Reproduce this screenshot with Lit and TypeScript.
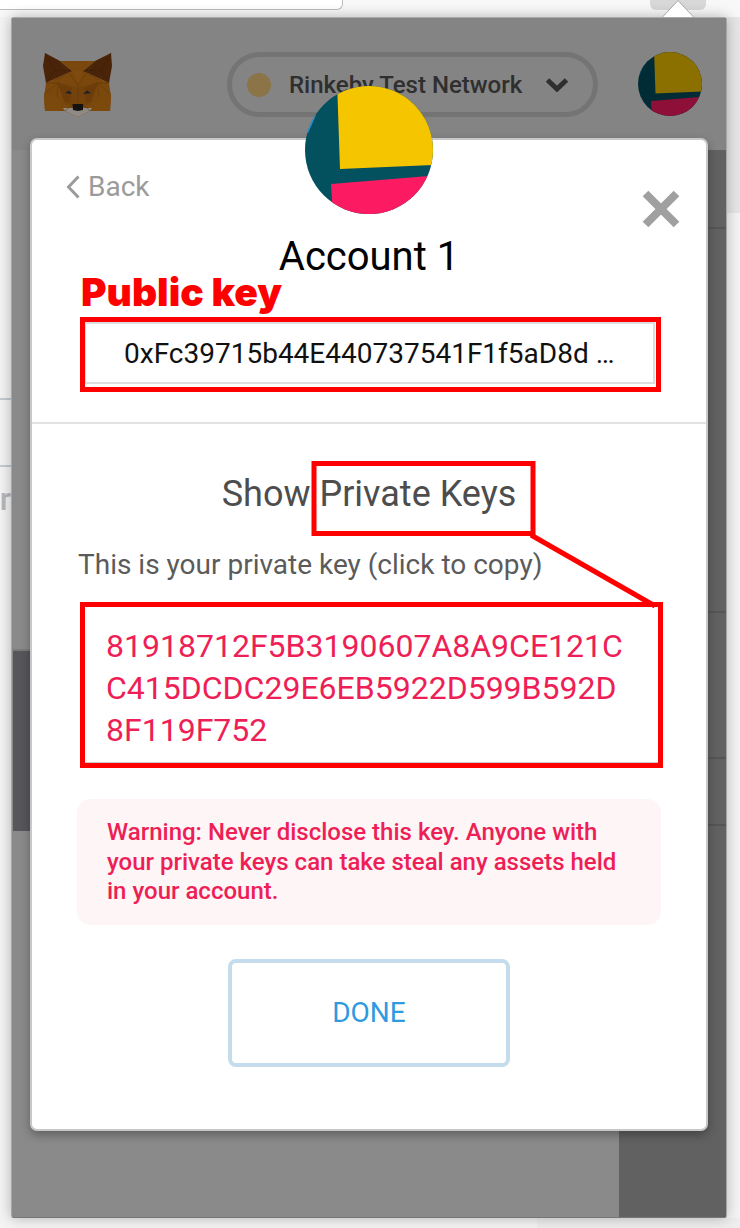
import { LitElement, html, css, svg } from "lit";
import { customElement } from "lit/decorators.js";

const avatar = (teal: string, yellow: string, pink: string, blue: string, cls: string) => html`
  <svg class=${cls} viewBox="0 0 128 128" aria-hidden="true">
    <defs><clipPath id="c-${cls}"><circle cx="64" cy="64" r="64"></circle></clipPath></defs>
    <g clip-path="url(#c-${cls})">
      <rect width="128" height="128" fill=${teal}></rect>
      <polygon points="11,29 3,47 -2,47 -2,29" fill=${blue}></polygon>
      <polygon points="32,-5 35,83 130,79 130,-5" fill=${yellow}></polygon>
      <polygon points="26,98 124,90 130,130 28,130" fill=${pink}></polygon>
    </g>
  </svg>`;

const fox = svg`
  <polygon points="2,1 17,9 29,19 3,31 0,14" fill="#4a2408"></polygon>
  <polygon points="68,1 52,9 40,19 66,31 69,14" fill="#4a2408"></polygon>
  <polygon points="17,9 52,9 40,19 66,31 68,45 67,59 47,59 35,65 22,59 2,59 1,45 3,31 29,19" fill="#7a470d"></polygon>
  <polygon points="29,19 35,33 40,19" fill="#7f4a0e"></polygon>
  <polygon points="15,31 34,35 54,31 47,52 35,54 22,52" fill="#74430c"></polygon>
  <polygon points="14,30 29,36 27,50 22,50" fill="#6c3d0a"></polygon>
  <polygon points="55,30 41,36 43,50 48,50" fill="#6c3d0a"></polygon>
  <polygon points="1,42 14,45 22,59 2,59" fill="#7c490d"></polygon>
  <polygon points="68,42 56,45 47,59 67,59" fill="#7c490d"></polygon>
  <polygon points="20,56 49,56 47,59 35,65 22,59" fill="#8f8a84"></polygon>
  <polygon points="29.5,52 40,52 40,58 35,59 30,58" fill="#141210"></polygon>
  <polygon points="22,41 26,38.5 29,42" fill="#16222e"></polygon>
  <polygon points="48,41 44,38.5 40,42" fill="#16222e"></polygon>
  <g stroke="#5f3609" stroke-width=".5" fill="none">
    <path d="M17 9 35 33 52 9M29 19 12 28M40 19 57 28M3 31 15 31 1 42M66 31 54 31 68 42M15 31 14 45M54 31 56 45M35 33V52M22 59 29.5 52M47 59 40 52"></path>
  </g>
  <g stroke="#3a1c06" stroke-width=".5" fill="none">
    <path d="M2 1 12 18 3 31M12 18 29 19M68 1 58 18 66 31M58 18 40 19"></path>
  </g>`;

@customElement("app-root")
export class AppRoot extends LitElement {
  static styles = css`
    :host {
      display: block;
      position: relative;
      width: 740px;
      height: 1228px;
      overflow: hidden;
      background: #f4f4f4;
      font-family: Roboto, "Liberation Sans", sans-serif;
    }
    .chrome { display: flex; height: 17px; background: #f8f8f8; }
    .urlbar {
      width: 343px;
      height: 10px;
      box-sizing: border-box;
      background: #fff;
      border: solid #bdbdbd;
      border-width: 0 1.5px 1.5px 0;
      border-radius: 0 0 6px 0;
    }
    .ext {
      width: 56px;
      height: 10px;
      margin-left: 307px;
      background: #d8d8d8;
      border-radius: 0 0 6px 6px;
    }
    .arrow { position: absolute; left: 660px; top: 0; width: 36px; height: 18px; z-index: 2; }
    .stage { display: flex; height: 1201px; }
    .left { width: 11px; padding-top: 381px; }
    .left i { display: block; height: 2px; background: #c4cbd2; }
    .left i + i { margin-top: 65px; }
    .left b {
      display: block;
      margin-top: 12px;
      margin-left: -11px;
      font: 500 32px/40px Roboto, sans-serif;
      color: #b6b8ba;
      text-align: right;
    }
    .popup {
      position: relative;
      z-index: 1;
      width: 716px;
      box-sizing: border-box;
      border-top: 1.5px solid #a9a9a9;
      border-left: 1px solid #a6a6a6;
      border-right: 1px solid #a6a6a6;
      border-bottom: 1px solid #777;
      border-radius: 3px;
      background: #8a8a8a;
      box-shadow: 0 0 14px rgba(0, 0, 0, 0.28);
      display: flex;
      flex-direction: column;
    }
    .header {
      height: 132px;
      flex: none;
      box-sizing: border-box;
      padding: 34px 24px 0 31px;
      background: #848484;
      display: flex;
      align-items: flex-start;
    }
    .fox { width: 70px; height: 66px; flex: none; }
    .pill {
      width: 371px;
      height: 65px;
      flex: none;
      box-sizing: border-box;
      margin-left: auto;
      border: 5px solid #747474;
      border-radius: 33px;
      padding: 0 24px 0 15px;
      display: flex;
      align-items: center;
      color: #2f2f2f;
      font-size: 24px;
      font-weight: 500;
      white-space: nowrap;
    }
    .dot { width: 24px; height: 24px; border-radius: 50%; background: #8b7447; margin-right: 18px; flex: none; }
    .pill span.name { flex: 1; }
    .chev { width: 24px; height: 15px; }
    .mini { width: 64px; height: 64px; display: block; margin-left: 40px; flex: none; }
    .body { flex: 1; display: flex; min-height: 0; }
    .main { flex: 1; display: flex; flex-direction: column; padding-top: 499px; background: #8a8a8a; }
    .selected { width: 19px; height: 180px; background: #56565b; border-top: 2px solid #7a7a7a; margin-left: 1px; }
    .side { width: 107px; background: #616161; }
    .side i { display: block; height: 2px; background: #555; }
    .side i:nth-child(1) { margin-top: 77px; }
    .side i:nth-child(2) { margin-top: 382px; }
    .side i:nth-child(3) { margin-top: 144px; }
    .side i:nth-child(4) { margin-top: 65px; }
    .right { width: 13px; display: flex; flex-direction: column; }
    .right div { height: 196px; background: #e6e6e6; }
    .bottom { height: 10px; display: flex; justify-content: flex-end; }
    .bottom div { width: 203px; background: #eee; }

    .modal {
      position: absolute;
      z-index: 3;
      left: 30px;
      top: 138px;
      width: 678px;
      height: 993px;
      box-sizing: border-box;
      border: 2px solid #c8c8c8;
      border-radius: 7px;
      background: #fff;
      box-shadow: 0 4px 10px rgba(0, 0, 0, 0.3);
      display: flex;
      flex-direction: column;
    }
    .big { position: absolute; left: 273px; top: -54px; width: 128px; height: 128px; display: block; }
    .top {
      height: 97px;
      flex: none;
      box-sizing: border-box;
      padding: 31px 26px 0 34px;
      display: flex;
      justify-content: space-between;
      align-items: flex-start;
    }
    .back {
      display: flex;
      align-items: center;
      gap: 8px;
      color: #9b9b9b;
      font-size: 28px;
      line-height: 32px;
    }
    .back svg { width: 14px; height: 24px; }
    .close { width: 38px; height: 38px; margin-top: 19px; }
    h1 {
      margin: 0;
      height: 40px;
      font-size: 40px;
      line-height: 40px;
      font-weight: 400;
      color: #000;
      text-align: center;
    }
    .address {
      margin: 45px 0 0 52px;
      width: 571px;
      height: 62px;
      flex: none;
      box-sizing: border-box;
      border: 2px solid #ddd;
      font-size: 28px;
      line-height: 60px;
      color: #111;
      padding-left: 38px;
      white-space: nowrap;
    }
    hr { margin: 38px 0 0; border: 0; height: 2px; background: #e2e2e2; flex: none; }
    .content { padding: 0 45px; display: flex; flex-direction: column; flex: 1; }
    h2 {
      margin: 48px 0 0;
      font-size: 36px;
      line-height: 44px;
      font-weight: 400;
      color: #4d4d4d;
      text-align: center;
    }
    .hint { margin: 33px 0 0 1px; font-size: 28px; line-height: 32px; color: #5b5b5b; white-space: nowrap; }
    .key {
      margin: 23px 0 0 3px;
      height: 160px;
      flex: none;
      box-sizing: border-box;
      width: 581px;
      padding: 21px 35px 0 24px;
      font-size: 32px;
      line-height: 42px;
      color: #ee1f56;
      word-break: break-all;
      border-left: 2px solid #ccc;
      border-bottom: 2px solid #ccc;
    }
    .warn {
      margin-top: 35px;
      height: 126px;
      flex: none;
      box-sizing: border-box;
      border-radius: 14px;
      background: #fdf5f6;
      padding: 19px 30px 0;
      font-size: 24px;
      line-height: 29.5px;
      font-weight: 500;
      color: #ee1f56;
    }
    .done {
      align-self: center;
      margin-top: 34px;
      width: 282px;
      height: 108px;
      flex: none;
      box-sizing: border-box;
      border: 4px solid #c5dcec;
      border-radius: 8px;
      padding-bottom: 2px;
      display: flex;
      align-items: center;
      justify-content: center;
      background: #fff;
      font: 400 28px Roboto, sans-serif;
      color: #2f9ae0;
    }
    .annot { position: absolute; left: 0; top: 0; width: 740px; height: 1228px; z-index: 4; pointer-events: none; }
    .label {
      position: absolute;
      z-index: 5;
      left: 81px;
      top: 269px;
      font: 900 39px/46px Inter, sans-serif;
      color: #ff0000;
      white-space: nowrap;
    }
  `;

  render() {
    return html`
      <div class="chrome"><div class="urlbar"></div><div class="ext"></div></div>
      <svg class="arrow" viewBox="0 0 36 18" aria-hidden="true">
        <polygon points="2,17.5 18,0.5 34,17.5" fill="#fff" stroke="#a8a8a8" stroke-width="1"></polygon>
      </svg>
      <div class="stage">
        <div class="left"><i></i><i></i><b>r</b></div>
        <div class="popup">
          <div class="header">
            <svg class="fox" viewBox="0 0 70 66" aria-hidden="true">${fox}</svg>
            <div class="pill">
              <span class="dot"></span>
              <span class="name">Rinkeby Test Network</span>
              <svg class="chev" viewBox="0 0 24 15" aria-hidden="true">
                <path d="M2.5 3 12 12 21.5 3" fill="none" stroke="#2f2f2f" stroke-width="5"></path>
              </svg>
            </div>
            ${avatar("#012c36", "#8b7000", "#8e0f38", "#0c4f78", "mini")}
          </div>
          <div class="body">
            <div class="main"><div class="selected"></div></div>
            <div class="side"><i></i><i></i><i></i><i></i></div>
          </div>
        </div>
        <div class="right"><div></div></div>
      </div>
      <div class="bottom"><div></div></div>

      <div class="modal">
        ${avatar("#03505f", "#f5c500", "#fc1b62", "#2a9ae0", "big")}
        <div class="top">
          <div class="back">
            <svg viewBox="0 0 14 24" aria-hidden="true">
              <path d="M12.5 1.5 2.5 12 12.5 22.5" fill="none" stroke="#9b9b9b" stroke-width="3"></path>
            </svg>
            Back
          </div>
          <svg class="close" viewBox="0 0 38 38" aria-hidden="true">
            <path d="M3.5 3.5 34.5 34.5M34.5 3.5 3.5 34.5" fill="none" stroke="#a0a0a0" stroke-width="8"></path>
          </svg>
        </div>
        <h1>Account 1</h1>
        <div class="address">0xFc39715b44E440737541F1f5aD8d …</div>
        <hr />
        <div class="content">
          <h2>Show Private Keys</h2>
          <div class="hint">This is your private key (click to copy)</div>
          <div class="key">81918712F5B3190607A8A9CE121CC415DCDC29E6EB5922D599B592D8F119F752</div>
          <div class="warn">Warning: Never disclose this key. Anyone with your private keys can take steal any assets held in your account.</div>
          <div class="done">DONE</div>
        </div>
      </div>

      <div class="label">Public key</div>
      <svg class="annot" viewBox="0 0 740 1228" aria-hidden="true">
        <g fill="none" stroke="#ff0000" stroke-width="5">
          <rect x="82.5" y="319.5" width="576" height="70"></rect>
          <rect x="314" y="463.5" width="219" height="70"></rect>
          <rect x="82.5" y="604.5" width="578" height="161"></rect>
          <path d="M531 535 655 606"></path>
        </g>
      </svg>
    `;
  }
}
